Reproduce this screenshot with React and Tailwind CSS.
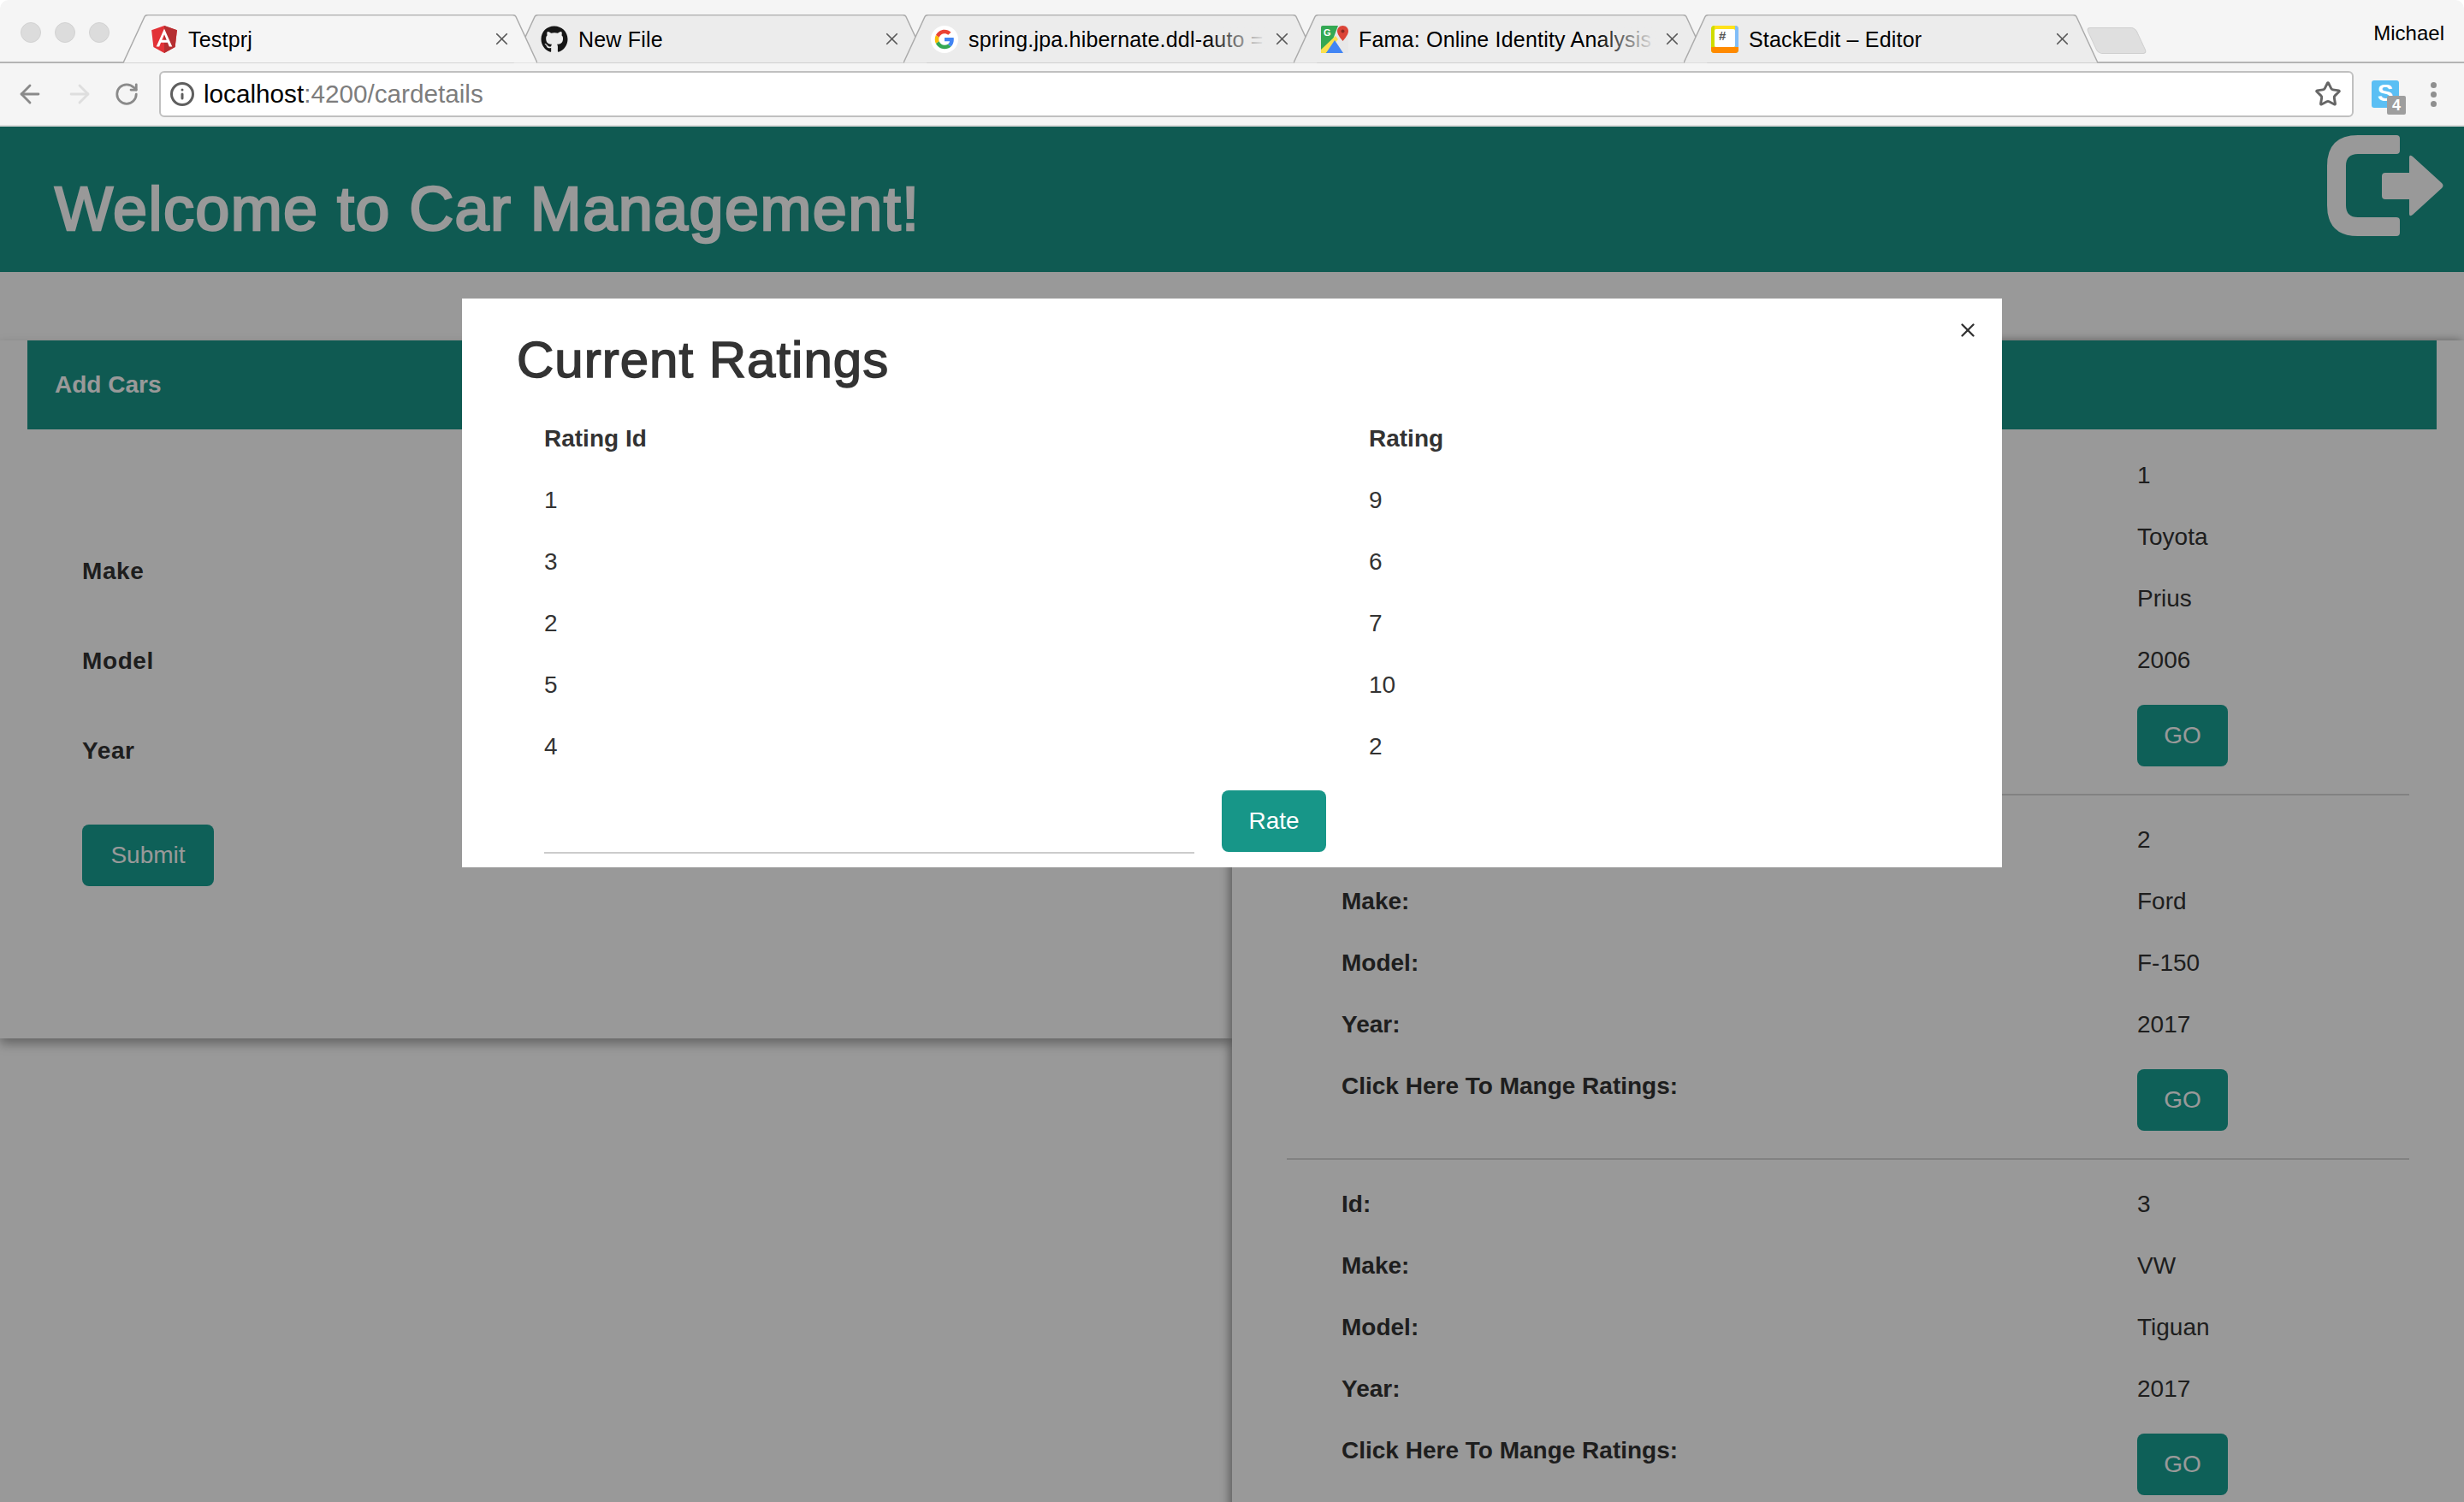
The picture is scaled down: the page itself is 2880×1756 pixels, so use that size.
import React from 'react';
import { ArrowLeft, ArrowRight, RotateCw, Info, Star, X } from 'lucide-react';
import { FaGithub } from 'react-icons/fa';

const AngularIcon = () => (
    <svg width="30" height="32" viewBox="32 30 186 200">
        <polygon fill="#E23237" points="125,30 31.9,63.2 46.1,186.3 125,230 203.9,186.3 218.1,63.2" />
        <polygon fill="#B52E31" points="125,30 125,230 203.9,186.3 218.1,63.2" />
        <path fill="#FFF" d="M125,52.1L66.8,182.6h21.7l11.7-29.2h49.4l11.7,29.2h21.7L125,52.1z M142,135.4H108l17-40.9L142,135.4z" />
    </svg>
);

const GoogleIcon = () => (
    <svg width="32" height="32" viewBox="-10 -10 68 68">
        <circle cx="24" cy="24" r="34" fill="#fff" />
        <path fill="#EA4335" d="M24 9.5c3.54 0 6.71 1.22 9.21 3.6l6.85-6.85C35.9 2.38 30.47 0 24 0 14.62 0 6.51 5.38 2.56 13.22l7.98 6.19C12.43 13.72 17.74 9.5 24 9.5z" />
        <path fill="#4285F4" d="M46.98 24.55c0-1.57-.15-3.09-.38-4.55H24v9.02h12.94c-.58 2.96-2.26 5.48-4.78 7.18l7.73 6c4.51-4.18 7.09-10.36 7.09-17.65z" />
        <path fill="#FBBC05" d="M10.53 28.59c-.5-1.45-.78-2.99-.78-4.59s.27-3.14.78-4.59l-7.98-6.19C.92 16.46 0 20.12 0 24c0 3.88.92 7.54 2.56 10.78l7.97-6.19z" />
        <path fill="#34A853" d="M24 48c6.48 0 11.93-2.13 15.89-5.81l-7.73-6c-2.15 1.45-4.92 2.3-8.16 2.3-6.26 0-11.57-4.22-13.47-9.91l-7.98 6.19C6.51 42.62 14.62 48 24 48z" />
    </svg>
);

const MapsIcon = () => (
    <svg width="32" height="32" viewBox="0 0 32 32">
        <rect width="32" height="32" rx="2" fill="#34a853" />
        <polygon points="20,0 32,0 32,32 24,32 14,16" fill="#e8e8e8" />
        <polygon points="0,32 0,28 17,12 20,16 6,32" fill="#fbe04c" />
        <polygon points="6,32 16,17 26,32" fill="#4285f4" />
        <path d="M25.5 0c-3.6 0-6.5 2.9-6.5 6.5 0 4.5 6.5 11.5 6.5 11.5S32 11 32 6.5C32 2.9 29.100 0 25.500 0z" fill="#db4437" />
        <circle cx="25.500" cy="6.500" r="2" fill="#8c2a22" />
        <text x="3" y="12" fontSize="11" fontWeight="700" fill="#fff" fontFamily="Liberation Sans">G</text>
    </svg>
);

const StackEditIcon = () => (
    <div className="relative w-[32px] h-[32px] rounded-[4px] overflow-hidden bg-[#ffe21a] flex">
        <div className="w-[4px] h-full bg-[#cfdc00]"></div>
        <div className="flex-1 mt-[4px] mb-[7px] bg-white rounded-[2px] [font-family:'Liberation_Sans',sans-serif] font-bold text-[15px] leading-[16px] text-[#555] pl-[5px]">#</div>
        <div className="w-[4px] h-full bg-[#80bdf8]"></div>
        <div className="absolute left-0 right-0 bottom-0 h-[7px] bg-[#ff8a00]"></div>
    </div>
);

const TabShape = ({ active }) => (
    <svg className="absolute inset-0" width="484" height="57" viewBox="0 0 484 57">
        <path d="M0 56.500 L25 2.500 Q26 0.500 29 0.500 L455 0.500 Q458 0.500 459 2.500 L484 56.500 Z" fill={active ? '#f5f5f5' : '#ececec'} stroke="none" />
        <path d="M0 56.500 L25 2.500 Q26 0.500 29 0.500 L455 0.500 Q458 0.500 459 2.500 L484 56.500" fill="none" stroke="#ababab" strokeWidth="1.500" />
    </svg>
);

const tabs = [
    { title: 'Testprj', icon: <AngularIcon />, active: true },
    { title: 'New File', icon: <FaGithub size={32} color="#161616" /> },
    { title: 'spring.jpa.hibernate.ddl-auto = update', icon: <GoogleIcon />, fade: true },
    { title: 'Fama: Online Identity Analysis for Recruiters', icon: <MapsIcon />, fade: true },
    { title: 'StackEdit – Editor', icon: <StackEditIcon /> },
];

const Tab = ({ tab, first }) => (
    <div className={`relative h-[57px] w-[484px] flex items-center pl-[32px] shrink-0 ${first ? 'z-10' : '-ml-[28px]'}`}>
        <TabShape active={tab.active} />
        <div className="relative w-[32px] h-[32px] flex items-center justify-center shrink-0">{tab.icon}</div>
        <div className="relative ml-[12px] w-[348px] text-[25px] leading-[32px] tracking-[0.2px] text-black whitespace-nowrap overflow-hidden">
            {tab.title}
            {tab.fade && <div className="absolute top-0 bottom-0 right-0 w-[70px] bg-gradient-to-r from-transparent to-[#ececec]"></div>}
        </div>
        <X className="relative ml-[7px] shrink-0" size={23} strokeWidth={1.8} color="#5a5a5a" />
    </div>
);

const BrowserChrome = () => (
    <div className="bg-[#f5f5f5] rounded-t-[10px] shrink-0">
        <div className="relative h-[74px] flex items-end border-b-[2px] border-[#b4b4b4]">
            <div className="flex gap-[16px] w-[144px] h-full pl-[24px] pt-[26px]">
                <span className="w-[24px] h-[24px] rounded-full bg-[#dcdcdc] border border-[#d2d2d2]"></span>
                <span className="w-[24px] h-[24px] rounded-full bg-[#dcdcdc] border border-[#d2d2d2]"></span>
                <span className="w-[24px] h-[24px] rounded-full bg-[#dcdcdc] border border-[#d2d2d2]"></span>
            </div>
            <div className="flex -mb-[2px]">
                {tabs.map((tab, i) => (
                    <Tab key={i} tab={tab} first={i === 0} />
                ))}
            </div>
            <div className="-ml-[7px] mb-[9px] w-[58px] h-[31px] bg-[#dfdfdf] border border-[#cfcfcf] rounded-[5px] [transform:skewX(25deg)]"></div>
            <div className="ml-auto mr-[23px] self-start mt-[22px] text-[24px] leading-[34px] text-black">Michael</div>
        </div>
        <div className="h-[74px] flex items-center border-b-[2px] border-[#dcdcdc]">
            <div className="w-[186px] flex items-center pl-[18px] shrink-0">
                <ArrowLeft size={34} strokeWidth={2} color="#8a8a8a" />
                <ArrowRight className="ml-[24px]" size={34} strokeWidth={2} color="#dedede" />
                <RotateCw className="ml-[23px]" size={30} strokeWidth={2.200} color="#8a8a8a" />
            </div>
            <div className="w-[2565px] h-[54px] bg-white border-[2px] border-[#c0c0c0] rounded-[6px] flex items-center pl-[10px] pr-[12px]">
                <Info size={30} strokeWidth={2.400} color="#5f5f5f" />
                <div className="ml-[10px] text-[29.700px] text-black whitespace-nowrap">
                    localhost<span className="text-[#7d7d7d]">:4200/cardetails</span>
                </div>
                <Star className="ml-auto" size={32} strokeWidth={2.200} color="#666666" />
            </div>
            <div className="relative ml-[21px] w-[32px] h-[32px] bg-[#5bbff4] rounded-[3px] shrink-0 text-center">
                <div className="text-white font-bold text-[28px] leading-[30px]">S</div>
                <div className="absolute left-[18px] top-[18px] w-[22px] h-[22px] bg-[#9e9e9e] rounded-[2px] text-white font-bold text-[18px] leading-[22px] text-center">4</div>
            </div>
            <div className="ml-[37px] flex flex-col gap-[4px]">
                <span className="w-[7px] h-[7px] rounded-full bg-[#8f8f8f]"></span>
                <span className="w-[7px] h-[7px] rounded-full bg-[#8f8f8f]"></span>
                <span className="w-[7px] h-[7px] rounded-full bg-[#8f8f8f]"></span>
            </div>
        </div>
    </div>
);

const LogoutIcon = () => (
    <svg width="136" height="118" viewBox="0 0 136 118" fill="#fff">
        <path d="M36 0H81Q85 0 85 4V18Q85 22 81 22H36Q22 22 22 36V82Q22 96 36 96H81Q85 96 85 100V114Q85 118 81 118H36Q0 118 0 82V36Q0 0 36 0Z" />
        <path d="M68 44H96V26Q96 22 100 25L134 56Q137 59 134 62L100 93Q96 96 96 92V75H68Q64 75 64 71V48Q64 44 68 44Z" />
    </svg>
);

const Row = ({ label, children }) => (
    <div className="grid grid-cols-[930px_1fr] h-[72px] items-center">
        <div className="font-bold">{label}</div>
        <div>{children}</div>
    </div>
);

const CarCard = ({ car }) => (
    <div className="pt-[16px] pb-[32px] border-b-[2px] border-[#d9d9d9] px-[64px]">
        <Row label="Id:">{car.id}</Row>
        <Row label="Make:">{car.make}</Row>
        <Row label="Model:">{car.model}</Row>
        <Row label="Year:">{car.year}</Row>
        <div className="grid grid-cols-[930px_1fr] h-[88px] items-start">
            <div className="font-bold h-[72px] flex items-center">Click Here To Mange Ratings:</div>
            <button className="mt-[16px] w-[106px] h-[72px] bg-[#18a093] text-white rounded-[8px]">GO</button>
        </div>
    </div>
);

const cars = [
    { id: 1, make: 'Toyota', model: 'Prius', year: 2006 },
    { id: 2, make: 'Ford', model: 'F-150', year: 2017 },
    { id: 3, make: 'VW', model: 'Tiguan', year: 2017 },
];

const ratings = [
    { id: 1, rating: 9 },
    { id: 3, rating: 6 },
    { id: 2, rating: 7 },
    { id: 5, rating: 10 },
    { id: 4, rating: 2 },
];

const FormLabel = ({ children }) => (
    <div className="h-[105px] flex items-center font-bold tracking-[0.6px]">{children}</div>
);

const RatingsModal = () => (
    <div className="absolute left-[540px] top-[201px] w-[1800px] h-[665px] bg-white text-[#333] pl-[64px]">
        <X className="absolute right-[27px] top-[24px]" size={26} strokeWidth={2.200} color="#333333" />
        <h2 className="pt-[39px] text-[60px] leading-[66px] tracking-[1px] [-webkit-text-stroke:1.500px_#333] mb-[23px]">Current Ratings</h2>
        <div className="grid grid-cols-[964px_1fr] pl-[32px]">
            <div className="h-[72px] flex items-center font-bold">Rating Id</div>
            <div className="h-[72px] flex items-center font-bold">Rating</div>
            {ratings.map((r) => (
                <React.Fragment key={r.id}>
                    <div className="h-[72px] flex items-center">{r.id}</div>
                    <div className="h-[72px] flex items-center">{r.rating}</div>
                </React.Fragment>
            ))}
        </div>
        <div className="flex items-start mt-[15px] pl-[32px] gap-[32px]">
            <div className="w-[760px] h-[74px] border-b-[2px] border-[#cccccc]"></div>
            <button className="w-[122px] h-[72px] bg-[#179688] text-white rounded-[8px]">Rate</button>
        </div>
    </div>
);

const App = () => {
    return (
        <div className="h-screen flex flex-col overflow-hidden bg-white [font-family:'Liberation_Sans',Arial,sans-serif]">
            <BrowserChrome />

            <div className="relative flex-1 overflow-hidden text-[28px] text-[#333]">
                <header className="h-[170px] bg-[#199689] flex justify-between pl-[64px] pr-[24px] pt-[9px]">
                    <h1 className="mt-[47px] text-[72px] leading-[80px] tracking-[1.400px] text-white [-webkit-text-stroke:2.500px_#fff]">Welcome to Car Management!</h1>
                    <div className="pt-[1px]"><LogoutIcon /></div>
                </header>

                <div className="flex items-start mt-[80px]">
                    {/* Add form */}
                    <section className="w-[1440px] h-[816px] bg-white shadow-[0_6px_12px_rgba(0,0,0,0.35)] px-[32px]">
                        <div className="h-[104px] bg-[#199689] flex items-center pl-[32px] text-white font-bold">Add Cars</div>
                        <div className="pl-[64px] pt-[113px]">
                            <FormLabel>Make</FormLabel>
                            <FormLabel>Model</FormLabel>
                            <FormLabel>Year</FormLabel>
                            <button className="mt-[34px] w-[154px] h-[72px] bg-[#18a093] text-white rounded-[8px]">Submit</button>
                        </div>
                    </section>

                    {/* Car list */}
                    <section className="w-[1440px] h-[1400px] bg-white shadow-[-3px_0_10px_rgba(0,0,0,0.4)] px-[32px]">
                        <div className="h-[104px] bg-[#199689]"></div>
                        <div className="px-[32px] pt-[2px]">
                            {cars.map((car) => (
                                <CarCard key={car.id} car={car} />
                            ))}
                        </div>
                    </section>
                </div>

                <div className="absolute inset-0 bg-black/40"></div>
                <RatingsModal />
            </div>
        </div>
    );
};

export default App;
